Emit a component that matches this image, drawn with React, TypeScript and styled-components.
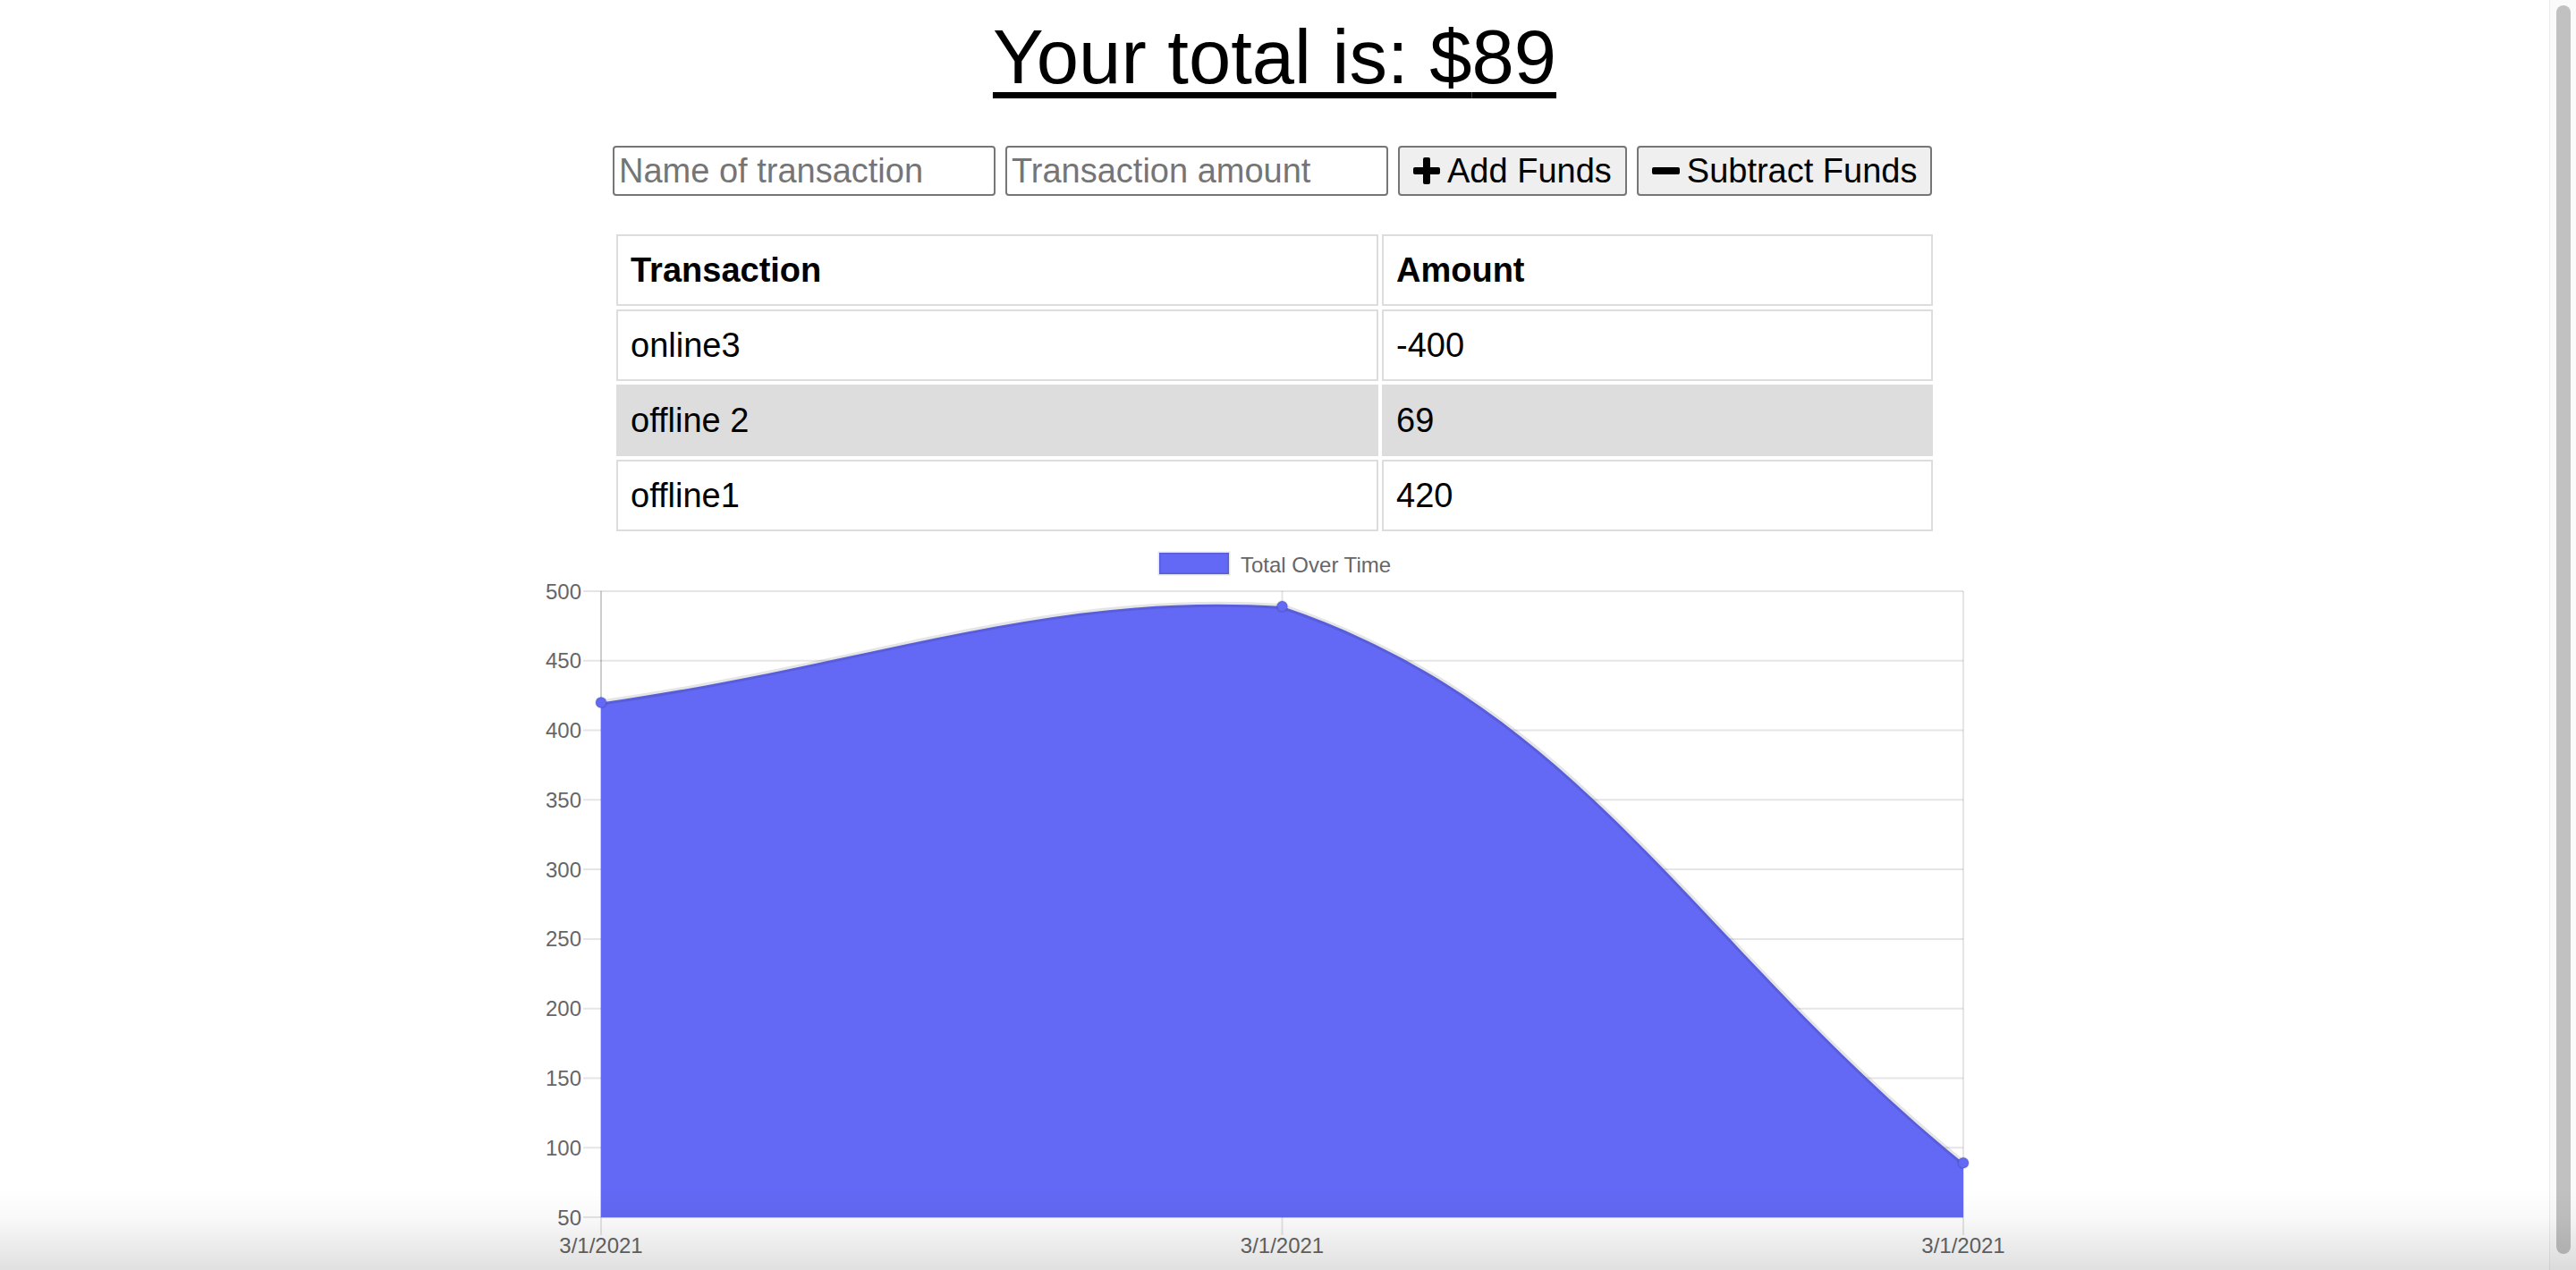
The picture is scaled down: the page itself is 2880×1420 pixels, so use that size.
import styled, { createGlobalStyle } from "styled-components";

const GlobalStyle = createGlobalStyle`
  html, body {
    margin: 0;
    padding: 0;
    height: 100%;
    overflow: hidden;
    background: #fff;
  }
  body {
    font-family: "Liberation Sans", Arial, Helvetica, sans-serif;
    color: #000;
  }
`;

const Frame = styled.div`
  display: flex;
  height: 100vh;
`;

const Page = styled.main`
  flex: 1;
  display: flex;
  flex-direction: column;
  align-items: center;
  overflow: hidden;
`;

const Title = styled.h1`
  margin: 14px 0 0;
  font-size: 85px;
  line-height: 100px;
  font-weight: 400;
  text-decoration: underline;
  text-decoration-thickness: 7px;
  text-underline-offset: 10px;
`;

const Controls = styled.form`
  margin-top: 49px;
  width: 1480px;
  display: flex;
  gap: 11px;
`;

const TextInput = styled.input`
  box-sizing: border-box;
  width: 428px;
  height: 56px;
  padding: 2px 5px;
  border: 2px solid #767676;
  border-radius: 4px;
  font-family: inherit;
  font-size: 38px;
  color: #000;
  &::placeholder {
    color: #757575;
  }
`;

const FundButton = styled.button`
  box-sizing: border-box;
  height: 56px;
  padding: 0 15px;
  display: inline-flex;
  align-items: center;
  gap: 8px;
  border: 2px solid #767676;
  border-radius: 4px;
  background: #efefef;
  font-family: inherit;
  font-size: 38px;
  color: #000;
`;

const Ledger = styled.table`
  margin-top: 39px;
  width: 1480px;
  border-collapse: separate;
  border-spacing: 4px;
  table-layout: fixed;
`;

const HeadCell = styled.th`
  box-sizing: border-box;
  height: 80px;
  padding: 0 14px;
  border: 2px solid #dddddd;
  text-align: left;
  font-size: 38px;
  font-weight: 700;
`;

const Cell = styled.td<{ $shaded?: boolean }>`
  box-sizing: border-box;
  height: 80px;
  padding: 0 14px;
  border: 2px solid #dddddd;
  background: ${(p) => (p.$shaded ? "#dddddd" : "#fff")};
  font-size: 38px;
`;

const ChartFrame = styled.div`
  width: 1640px;
  height: 822px;
  flex-shrink: 0;
`;

const ScrollTrack = styled.aside`
  width: 30px;
  box-sizing: border-box;
  display: flex;
  padding: 6px 6px 18px 7px;
  background: #fafafa;
  border-left: 1px solid #ebebeb;
`;

const ScrollThumb = styled.div`
  flex: 1;
  background: #c1c1c1;
  border-radius: 8px;
`;

const BottomShade = styled.div`
  position: fixed;
  left: 0;
  right: 0;
  bottom: 0;
  height: 90px;
  pointer-events: none;
  background: linear-gradient(
    to bottom,
    rgba(0, 0, 0, 0) 0%,
    rgba(0, 0, 0, 0.025) 35%,
    rgba(0, 0, 0, 0.12) 100%
  );
`;

const PlusIcon = () => (
  <svg width="30" height="30" viewBox="0 0 30 30">
    <rect x="0" y="11" width="30" height="8" rx="2" fill="#000" />
    <rect x="11" y="0" width="8" height="30" rx="2" fill="#000" />
  </svg>
);

const MinusIcon = () => (
  <svg width="31" height="30" viewBox="0 0 31 30">
    <rect x="0" y="11" width="31" height="8" rx="2" fill="#000" />
  </svg>
);

const transactions = [
  { name: "online3", value: -400 },
  { name: "offline 2", value: 69 },
  { name: "offline1", value: 420 },
];

type Pt = { x: number; y: number };

const FILL = "#6369f4";
const GRID = "rgba(0,0,0,0.1)";

const Chart = () => {
  const left = 67;
  const right = 1590;
  const top = 63;
  const bottom = 763;
  const ticks = [500, 450, 400, 350, 300, 250, 200, 150, 100, 50];
  const yOf = (v: number) => bottom - ((v - 50) * (bottom - top)) / 450;
  const xs = [left, (left + right) / 2, right];

  // running totals, oldest first
  let sum = 0;
  const totals = [...transactions].reverse().map((t) => (sum += t.value));
  const pts: Pt[] = totals.map((v, i) => ({ x: xs[i], y: yOf(v) }));

  const cap = (p: Pt) => ({
    x: Math.min(right, Math.max(left, p.x)),
    y: Math.min(bottom, Math.max(top, p.y)),
  });

  // chart.js style spline control points, tension 0.4
  const ctrl = pts.map((cur, i) => {
    const prev = pts[i - 1] || cur;
    const next = pts[i + 1] || cur;
    const d01 = Math.hypot(cur.x - prev.x, cur.y - prev.y);
    const d12 = Math.hypot(next.x - cur.x, next.y - cur.y);
    const s01 = d01 / (d01 + d12) || 0;
    const s12 = d12 / (d01 + d12) || 0;
    const fa = 0.4 * s01;
    const fb = 0.4 * s12;
    return {
      prev: cap({ x: cur.x - fa * (next.x - prev.x), y: cur.y - fa * (next.y - prev.y) }),
      next: cap({ x: cur.x + fb * (next.x - prev.x), y: cur.y + fb * (next.y - prev.y) }),
    };
  });

  let line = `M ${pts[0].x} ${pts[0].y}`;
  for (let i = 1; i < pts.length; i++) {
    const a = ctrl[i - 1].next;
    const b = ctrl[i].prev;
    line += ` C ${a.x} ${a.y} ${b.x} ${b.y} ${pts[i].x} ${pts[i].y}`;
  }
  const area = `${line} L ${right} ${bottom} L ${left} ${bottom} Z`;

  return (
    <ChartFrame>
      <svg width="1640" height="822" viewBox="0 0 1640 822" fontFamily="'Liberation Sans', Arial, sans-serif">
        <rect x="691" y="20" width="78" height="24" fill={FILL} stroke={GRID} strokeWidth="3" />
        <text x="782" y="33" fontSize="24" fill="#666" dominantBaseline="central">
          Total Over Time
        </text>

        {ticks.map((v) => (
          <line key={v} x1="47" x2={right} y1={yOf(v)} y2={yOf(v)} stroke={GRID} strokeWidth="2" />
        ))}
        {xs.map((x) => (
          <line key={x} x1={x} x2={x} y1={top} y2={bottom + 20} stroke={GRID} strokeWidth="2" />
        ))}
        <line x1={left} x2={left} y1={top} y2={bottom} stroke={GRID} strokeWidth="2" />
        <line x1={left} x2={right} y1={bottom} y2={bottom} stroke={GRID} strokeWidth="2" />

        {ticks.map((v) => (
          <text key={v} x="45" y={yOf(v)} fontSize="24" fill="#666" textAnchor="end" dominantBaseline="central">
            {v}
          </text>
        ))}
        {xs.map((x) => (
          <text key={x} x={x} y="794" fontSize="24" fill="#666" textAnchor="middle" dominantBaseline="central">
            3/1/2021
          </text>
        ))}

        <path d={area} fill={FILL} />
        <path d={line} fill="none" stroke={GRID} strokeWidth="6" />
        {pts.map((p) => (
          <circle key={p.x} cx={p.x} cy={p.y} r="6" fill={FILL} stroke={GRID} strokeWidth="2" />
        ))}
      </svg>
    </ChartFrame>
  );
};

const App = () => {
  const total = transactions.reduce((s, t) => s + t.value, 0);
  return (
    <>
      <GlobalStyle />
      <Frame>
        <Page>
          <Title>Your total is: ${total}</Title>
          <Controls onSubmit={(e) => e.preventDefault()}>
            <TextInput type="text" placeholder="Name of transaction" />
            <TextInput type="number" placeholder="Transaction amount" />
            <FundButton type="button">
              <PlusIcon />
              Add Funds
            </FundButton>
            <FundButton type="button">
              <MinusIcon />
              Subtract Funds
            </FundButton>
          </Controls>
          <Ledger>
            <colgroup>
              <col style={{ width: 852 }} />
              <col />
            </colgroup>
            <thead>
              <tr>
                <HeadCell>Transaction</HeadCell>
                <HeadCell>Amount</HeadCell>
              </tr>
            </thead>
            <tbody>
              {transactions.map((t, i) => (
                <tr key={t.name}>
                  <Cell $shaded={i === 1}>{t.name}</Cell>
                  <Cell $shaded={i === 1}>{t.value}</Cell>
                </tr>
              ))}
            </tbody>
          </Ledger>
          <Chart />
        </Page>
        <ScrollTrack>
          <ScrollThumb />
        </ScrollTrack>
      </Frame>
      <BottomShade />
    </>
  );
};

export default App;
